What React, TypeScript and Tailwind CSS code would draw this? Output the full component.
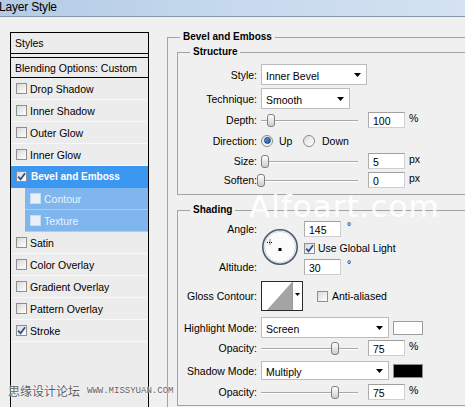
import React from 'react';

// list of effects shown on the left side of the dialog
const effects = [
  { label: 'Drop Shadow' },
  { label: 'Inner Shadow' },
  { label: 'Outer Glow' },
  { label: 'Inner Glow' },
  { label: 'Bevel and Emboss', checked: true, active: true },
  { label: 'Contour', sub: true },
  { label: 'Texture', sub: true },
  { label: 'Satin' },
  { label: 'Color Overlay' },
  { label: 'Gradient Overlay' },
  { label: 'Pattern Overlay' },
  { label: 'Stroke', checked: true },
];

function Arrow() {
  return (
    <svg width="7" height="4" viewBox="0 0 7 4" className="shrink-0">
      <path d="M0 0H7L3.5 4Z" fill="#000" />
    </svg>
  );
}

function Check({ on, light }: { on?: boolean; light?: boolean }) {
  return (
    <div
      className={`w-[11px] h-[11px] shrink-0 border flex items-center justify-center ${
        light ? 'border-[#c9dcf2] bg-[#e9f0f8]' : 'border-[#8f8f8f] bg-linear-to-br from-[#d9d9d9] to-white'
      }`}
    >
      {on && (
        <svg width="9" height="9" viewBox="0 0 9 9">
          <path d="M1.2 4.6L3.6 7.3L8 1.3" stroke="#2f4f9a" strokeWidth="1.8" fill="none" />
        </svg>
      )}
    </div>
  );
}

function Radio({ on }: { on?: boolean }) {
  return (
    <div className="w-[12px] h-[12px] shrink-0 rounded-full border border-[#8a8a8a] bg-linear-to-br from-[#dedede] to-white flex items-center justify-center">
      {on && <div className="w-[7px] h-[7px] rounded-full border border-[#1f3d6e] bg-linear-to-br from-[#5c9be0] to-[#1f5aa8]" />}
    </div>
  );
}

function Select({ value, className }: { value: string; className: string }) {
  return (
    <div className={`flex items-center justify-between h-full bg-white border border-[#bcbcbc] pl-[4px] pr-[5px] ${className}`}>
      <span className="pt-[2px]">{value}</span>
      <Arrow />
    </div>
  );
}

function Field({ value }: { value: string }) {
  return (
    <div className="w-[37px] h-[16px] shrink-0 bg-white border border-[#cfcfcf] border-t-[#9f9f9f] border-l-[#adadad] pl-[4px] pt-[2px] leading-[13px]">
      {value}
    </div>
  );
}

function Slider({ pos }: { pos: number }) {
  return (
    <div className="relative w-[97px] h-[14px] ml-[4px] shrink-0">
      <div className="absolute left-0 right-0 top-[7px] h-[1px] bg-[#a9a9a9]" />
      <div className="absolute left-0 right-0 top-[8px] h-[1px] bg-white" />
      <div
        className="absolute top-[1px] w-[8px] h-[13px] rounded-[3px] border border-[#7f7f7f] bg-linear-to-b from-white to-[#cdcdcd]"
        style={{ left: pos }}
      />
    </div>
  );
}

function Label({ children }: { children: React.ReactNode }) {
  return <div className="w-[79px] shrink-0 text-right">{children}</div>;
}

function SliderRow({ label, pos, value, unit, h }: { label: string; pos: number; value: string; unit: string; h: string }) {
  return (
    <div className={`flex items-center ${h}`}>
      <Label>{label}</Label>
      <Slider pos={pos} />
      <div className="ml-[10px]">
        <Field value={value} />
      </div>
      <span className="ml-[4px] -mt-[4px]">{unit}</span>
    </div>
  );
}

function AngleDial() {
  return (
    <svg width="38" height="38" viewBox="0 0 38 38">
      <circle cx="19" cy="19" r="17.2" fill="#fbfbfb" stroke="#4d5b70" strokeWidth="1.6" />
      <circle cx="19" cy="19" r="15.6" fill="none" stroke="#d3d8df" strokeWidth="1" />
      <path d="M6 14.5H12M9 11.5V17.5" stroke="#000" strokeWidth="1" strokeDasharray="1 1" />
      <rect x="17.5" y="20" width="3" height="3" fill="#000" />
    </svg>
  );
}

function GlossContour() {
  return (
    <svg width="42" height="30" viewBox="0 0 42 30">
      <rect x="0.5" y="0.5" width="41" height="29" fill="#fff" stroke="#2b2b2b" />
      <polygon points="6,29 31,1 31,29" fill="#a4a4a4" />
      <line x1="31.5" y1="1" x2="31.5" y2="29" stroke="#9a9a9a" />
      <path d="M34 12H39L36.5 15Z" fill="#000" />
    </svg>
  );
}

export default function App() {
  return (
    <div className="relative w-[465px] h-[407px] overflow-hidden bg-[#f0f0f0] text-black text-[10.5px] leading-[12px] font-['Liberation_Sans',Arial,sans-serif]">
      {/* title bar */}
      <div className="h-[17px] border-b border-[#8699ae] bg-linear-to-r from-[#b3cbe5] via-[#c6d9ed] to-[#d4e2f1] text-[12px] leading-[15px] -ml-[1px] tracking-[-0.2px]">
        Layer Style
      </div>

      <div className="flex items-start">
        {/* styles list */}
        <div className="ml-[10px] mt-[15px] w-[139px] h-[380px] shrink-0 border border-b-0 border-black bg-[#ececec]">
          <div className="h-[21px] border-b border-black flex items-center pl-[4px]">Styles</div>
          <div className="mt-[3px] h-[21px] border-y border-black flex items-center pl-[4px]">Blending Options: Custom</div>
          {effects.map((e) =>
            e.sub ? (
              <div key={e.label} className="h-[22px] pl-[14px] flex">
                <div className="flex-1 flex items-center pl-[5px] bg-[#80b6ee] border-b border-[#a9cdf3] text-[#eaf2fc]">
                  <Check light />
                  <span className="ml-[3px]">{e.label}</span>
                </div>
              </div>
            ) : (
              <div
                key={e.label}
                className={`h-[22px] flex items-center pl-[5px] border-b ${
                  e.active ? 'bg-[#3b97f0] border-[#3b97f0] text-white font-bold text-[10px]' : 'border-[#f8f8f8]'
                }`}
              >
                <Check on={e.checked} />
                <span className={e.active ? 'ml-[4px]' : 'ml-[3px]'}>{e.label}</span>
              </div>
            )
          )}
        </div>

        {/* settings */}
        <fieldset className="ml-[18px] mt-[14px] w-[320px] h-[400px] shrink-0 border-l border-t border-[#a3a3a3]">
          <legend className="ml-[12px] px-[3px] font-bold text-[10px] leading-[12px]">Bevel and Emboss</legend>

          <fieldset className="ml-[9px] mt-[3px] w-[300px] border border-[#a3a3a3] pb-[5px]">
            <legend className="ml-[12px] px-[3px] font-bold text-[10px] leading-[12px]">Structure</legend>
            <div className="mt-[6px] h-[21px] flex items-center">
              <Label>Style:</Label>
              <div className="ml-[4px] h-full">
                <Select value="Inner Bevel" className="w-[106px]" />
              </div>
            </div>
            <div className="mt-[3px] h-[21px] flex items-center">
              <Label>Technique:</Label>
              <div className="ml-[4px] h-full">
                <Select value="Smooth" className="w-[89px]" />
              </div>
            </div>
            <SliderRow label="Depth:" pos={6} value="100" unit="%" h="h-[21px]" />
            <div className="h-[21px] flex items-center">
              <Label>Direction:</Label>
              <div className="ml-[4px] w-[42px] flex items-center">
                <Radio on />
                <span className="ml-[6px]">Up</span>
              </div>
              <Radio />
              <span className="ml-[7px]">Down</span>
            </div>
            <SliderRow label="Size:" pos={0} value="5" unit="px" h="h-[19px]" />
            <SliderRow label="Soften:" pos={-4} value="0" unit="px" h="h-[19px]" />
          </fieldset>

          <fieldset className="ml-[9px] mt-[9px] w-[300px] border border-[#a3a3a3] pb-[4px]">
            <legend className="ml-[12px] px-[3px] font-bold text-[10px] leading-[12px]">Shading</legend>
            <div className="mt-[5px] h-[54px] flex">
              <div className="w-[79px] shrink-0 text-right flex flex-col justify-between">
                <div className="h-[16px] leading-[16px]">Angle:</div>
                <div className="h-[16px] leading-[16px]">Altitude:</div>
              </div>
              <div className="ml-[4px] w-[38px] pt-[7px]">
                <AngleDial />
              </div>
              <div className="ml-[5px] flex flex-col">
                <div className="h-[16px] flex items-start">
                  <Field value="145" />
                  <span className="ml-[6px] -mt-[1px]">°</span>
                </div>
                <div className="mt-[2px] h-[18px] flex items-center">
                  <Check on />
                  <span className="ml-[3px]">Use Global Light</span>
                </div>
                <div className="mt-[2px] h-[16px] flex items-start">
                  <Field value="30" />
                  <span className="ml-[6px] -mt-[1px]">°</span>
                </div>
              </div>
            </div>
            <div className="mt-[6px] h-[30px] flex items-center">
              <Label>Gloss Contour:</Label>
              <div className="ml-[4px] h-[30px]">
                <GlossContour />
              </div>
              <div className="ml-[14px]">
                <Check />
              </div>
              <span className="ml-[4px]">Anti-aliased</span>
            </div>
            <div className="mt-[6px] h-[21px] flex items-center">
              <Label>Highlight Mode:</Label>
              <div className="ml-[4px] h-full">
                <Select value="Screen" className="w-[128px]" />
              </div>
              <div className="ml-[4px] w-[30px] h-[14px] bg-white border border-[#9d9d9d]" />
            </div>
            <div className="mt-[1px]">
              <SliderRow label="Opacity:" pos={70} value="75" unit="%" h="h-[18px]" />
            </div>
            <div className="mt-[4px] h-[19px] flex items-center">
              <Label>Shadow Mode:</Label>
              <div className="ml-[4px] h-full">
                <Select value="Multiply" className="w-[128px]" />
              </div>
              <div className="ml-[4px] w-[30px] h-[14px] bg-black border border-[#8d8d8d]" />
            </div>
            <div className="mt-[3px]">
              <SliderRow label="Opacity:" pos={70} value="75" unit="%" h="h-[18px]" />
            </div>
          </fieldset>
        </fieldset>
      </div>

      {/* watermarks over the dialog */}
      <div className="absolute left-[249px] top-[191px] text-[31px] leading-[31px] tracking-[1px] text-white/90 font-['DejaVu_Sans',sans-serif] pointer-events-none">
        Alfoart.com
      </div>
      <div className="absolute left-[8px] top-[384px] flex items-center text-[#5e5e5e] [text-shadow:0_0_2px_#fff,0_0_1px_#fff] pointer-events-none">
        <span className="text-[12px] leading-[14px] font-['Noto_Sans_CJK_SC',sans-serif]">思缘设计论坛</span>
        <span className="ml-[7px] text-[9px] leading-[10px] font-['Liberation_Mono',monospace]">WWW.MISSYUAN.COM</span>
      </div>
    </div>
  );
}
